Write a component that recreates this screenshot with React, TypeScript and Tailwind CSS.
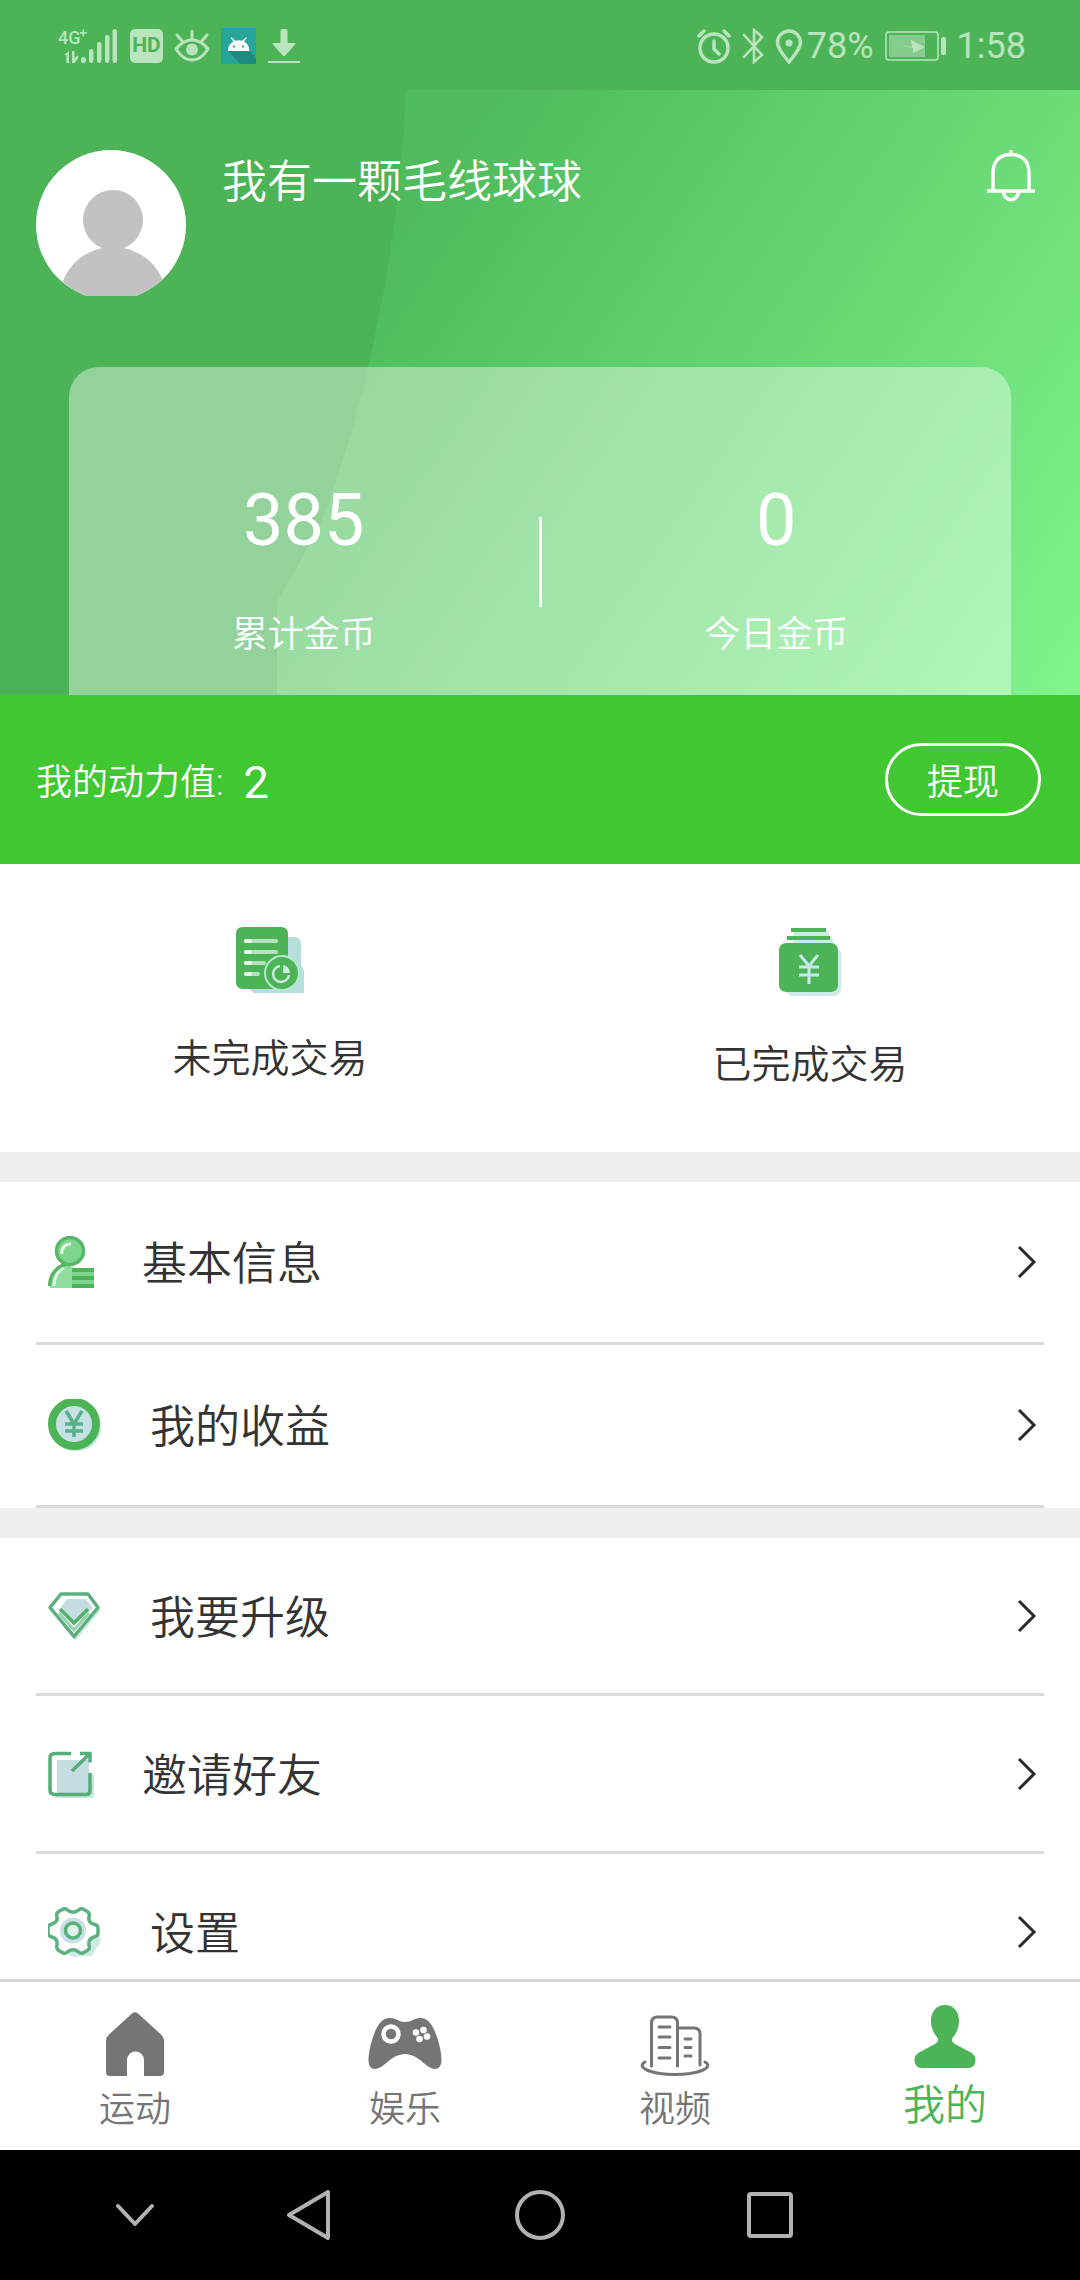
import type { ReactNode } from 'react';

const GREEN = '#4cb457';

const coins = [
  { label: '累计金币', value: 385 },
  { label: '今日金币', value: 0 },
];

const infoRows = [
  { label: '基本信息', icon: <ProfileIcon /> },
  { label: '我的收益', icon: <IncomeIcon /> },
];

const moreRows = [
  { label: '我要升级', icon: <DiamondIcon /> },
  { label: '邀请好友', icon: <ShareIcon /> },
  { label: '设置', icon: <GearIcon /> },
];

const tabs = [
  { label: '运动', icon: <HomeIcon /> },
  { label: '娱乐', icon: <GamepadIcon /> },
  { label: '视频', icon: <BuildingIcon /> },
];

export default function App() {
  return (
    <div className="flex h-screen flex-col bg-white font-['Roboto','Noto_Sans_CJK_SC',sans-serif] font-[350] text-[#333]">
      <StatusBar />
      <main className="min-h-0 flex-1 overflow-y-auto [scrollbar-width:none]">
        <ProfileHeader />
        <section className="flex items-center justify-between bg-[#40c732] pt-12 pr-[39px] pb-12 pl-9 text-white">
          <p className="flex items-center gap-5 pt-1.5">
            <span className="text-4xl">我的动力值:</span>
            <span className="text-[45px] leading-none font-normal">2</span>
          </p>
          <button className="rounded-full border-3 border-white px-[39px] pt-[17px] pb-[10px] text-4xl">提现</button>
        </section>
        <section className="grid grid-cols-2 pt-[63px] pb-[59px]">
          <a href="#pending" className="flex flex-col items-center gap-[38px]">
            <PendingIcon />
            <span className="text-[39px] leading-14">未完成交易</span>
          </a>
          <a href="#finished" className="flex flex-col items-center gap-[38px]">
            <FinishedIcon />
            <span className="text-[39px] leading-14">已完成交易</span>
          </a>
        </section>
        <div className="h-[30px] bg-[#efefef]" />
        <ul>
          {infoRows.map((row) => (
            <MenuRow key={row.label} label={row.label} icon={row.icon} height="h-[163px]" />
          ))}
        </ul>
        <div className="h-[30px] bg-[#efefef]" />
        <ul>
          {moreRows.map((row) => (
            <MenuRow key={row.label} label={row.label} icon={row.icon} height="h-[158px]" />
          ))}
        </ul>
      </main>
      <nav className="grid grid-cols-4 border-t-3 border-[#d6d6d6] pt-[22px] pb-3.5 text-[#757575]">
        {tabs.map((tab) => (
          <a key={tab.label} href="#tab" className="flex flex-col items-center justify-end gap-2">
            {tab.icon}
            <span className="text-4xl leading-[52px]">{tab.label}</span>
          </a>
        ))}
        <a href="#mine" className="flex flex-col items-center justify-end gap-2 text-[#4cb457]">
          <MineIcon />
          <span className="text-[42px] leading-[60px]">我的</span>
        </a>
      </nav>
      <SystemNav />
    </div>
  );
}

function StatusBar() {
  return (
    <div className="flex h-[90px] shrink-0 items-center justify-between bg-[#4cb457] pt-0.5 pr-[54px] pl-14 text-4xl font-normal text-[#b9e4bd]">
      <div className="flex items-center gap-[11px]">
        <svg width="63" height="36" viewBox="0 0 63 36" fill="currentColor">
          <text x="2" y="16" fontSize="18" fontWeight="500" fontFamily="Roboto">4G</text>
          <path d="M24 4h2.500v-2.500h1.600v2.500h2.500v1.700h-2.500v2.500h-1.600v-2.500H24z" />
          <path d="M8 27l5-4v12h-2.600v-8zM16 23h2.600v7l3.600-3v3.500L18.500 35H16z" />
          <rect x="25" y="29" width="5" height="6" rx="2.500" />
          <rect x="33" y="21" width="4.500" height="14" rx="2.200" />
          <rect x="41" y="14" width="4.500" height="21" rx="2.200" />
          <rect x="49" y="7" width="4.500" height="28" rx="2.200" />
          <rect x="56.500" y="1" width="4.500" height="34" rx="2.200" />
        </svg>
        <span className="flex h-[34px] w-[33px] items-center justify-center rounded-[5px] bg-[#b9e4bd] text-[21px] font-bold text-[#4cb457]">HD</span>
        <svg width="36" height="34" viewBox="0 0 36 34" fill="none" stroke="currentColor" strokeWidth="3" strokeLinecap="round">
          <path d="M2 20Q9 11 18 11t16 9q-7 11-16 11T2 20z" />
          <path d="M18 2v8M3 6l5 6M33 6l-5 6" />
          <circle cx="18" cy="20.500" r="6" fill="currentColor" stroke="none" />
        </svg>
        <svg width="35" height="36" viewBox="0 0 35 36">
          <path fill="#26a69a" d="M0 0h35v36H0z" />
          <path fill="#1f8a80" d="M7 23h22l6 7v6H19z" />
          <path fill="#fff" d="M7 23c0-5 2.500-8 5.500-9.500L9.500 10l1-.8 3.700 3.600c2-.8 5-.8 7 0l3.700-3.600 1 .8-3 3.500c3 1.500 5.500 4.500 5.500 9.500z" />
          <path fill="#26a69a" d="M12 17.500h2v2h-2zM21 17.500h2v2h-2z" />
        </svg>
        <svg width="34" height="36" viewBox="0 0 34 36" fill="currentColor">
          <path d="M13.500 3q0-2 2-2h3q2 0 2 2v12h7q2 0 .6 1.500L18.300 27.500q-1.300 1.200-2.600 0L5.900 16.500Q4.500 15 6.500 15h7zM1 33h32v2H1z" />
        </svg>
      </div>
      <div className="flex items-center gap-[11px]">
        <svg width="34" height="36" viewBox="0 0 34 36" fill="none" stroke="currentColor" strokeWidth="3.500" strokeLinecap="round">
          <circle cx="17" cy="20" r="14" />
          <path d="M17 13v8l5 5M2 8l5-5M32 8l-5-5" />
        </svg>
        <svg width="22" height="36" viewBox="0 0 22 36" fill="none" stroke="currentColor" strokeWidth="2.600" strokeLinecap="round">
          <path d="M2 7l18 20-8 7V2l8 7L2 29" />
        </svg>
        <div className="flex items-center gap-1">
          <svg width="28" height="36" viewBox="0 0 28 36" fill="none" stroke="currentColor" strokeWidth="3.500">
            <path d="M14 3a11.500 11.500 0 0 1 11.500 11.500C25.500 21 18 29 14 34 10 29 2.500 21 2.500 14.500A11.500 11.500 0 0 1 14 3z" />
            <circle cx="14" cy="15" r="3.500" fill="currentColor" stroke="none" />
          </svg>
          <span>78%</span>
        </div>
        <svg width="61" height="30" viewBox="0 0 61 30">
          <rect x="1" y="1" width="52" height="28" rx="3" fill="none" stroke="currentColor" strokeWidth="1.600" />
          <rect x="4" y="4" width="36" height="22" fill="#86cd8d" />
          <path d="M14 14l13 2-1-7 14 7-12 6 0-5z" fill="currentColor" />
          <rect x="56" y="6" width="5" height="18" rx="2" fill="currentColor" />
        </svg>
        <span>1:58</span>
      </div>
    </div>
  );
}

function ProfileHeader() {
  return (
    <header className="relative bg-[#4cb457] pt-15 text-white">
      <svg className="absolute inset-0 h-full w-full" viewBox="0 0 1080 605" preserveAspectRatio="none">
        <defs>
          <linearGradient id="glow" gradientUnits="userSpaceOnUse" x1="400" y1="130" x2="1080" y2="600">
            <stop offset="0" stopColor="#4fbb5c" />
            <stop offset="1" stopColor="#80f48d" />
          </linearGradient>
        </defs>
        <path fill="url(#glow)" d="M406 0H1080V605H277V512C300 470 322 440 337 388 360 320 398 180 406 0z" />
      </svg>
      <div className="relative flex items-start justify-between pr-11 pl-9">
        <div className="flex items-start gap-9">
          <Avatar />
          <h1 className="pt-[3px] text-[45px] leading-15">我有一颗毛线球球</h1>
        </div>
        <button aria-label="通知">
          <BellIcon />
        </button>
      </div>
      <div className="relative mx-[69px] mt-[71px] flex items-start rounded-t-[30px] bg-white/40 pt-[114px] pb-[30px]">
        <Coin label={coins[0].label} value={coins[0].value} />
        <div className="mt-9 h-[90px] w-[3px] bg-white" />
        <Coin label={coins[1].label} value={coins[1].value} />
      </div>
    </header>
  );
}

function Coin({ label, value }: { label: string; value: number }) {
  return (
    <div className="flex flex-1 flex-col items-center gap-11">
      <span className="text-7xl leading-20 font-normal">{value}</span>
      <span className="text-4xl leading-15">{label}</span>
    </div>
  );
}

function MenuRow({ label, icon, height }: { label: string; icon: ReactNode; height: string }) {
  return (
    <li className={`mx-9 border-b-3 border-[#dadada] ${height}`}>
      <a href="#menu" className="flex h-full items-center gap-12 pr-[7px] pl-3">
        {icon}
        <span className="flex-1 pt-1.5 text-[45px] leading-15">{label}</span>
        <svg width="20" height="34" viewBox="0 0 20 34" fill="none" stroke="#2b2b2b" strokeWidth="3">
          <path d="M2 2l15 15L2 32" />
        </svg>
      </a>
    </li>
  );
}

function SystemNav() {
  return (
    <div className="grid h-[130px] shrink-0 grid-cols-[195fr_230fr_230fr_230fr_195fr] items-center bg-black text-[#b2b2b2]">
      <button aria-label="收起" className="justify-self-end pr-10">
        <svg width="40" height="26" viewBox="0 0 40 26" fill="none" stroke="currentColor" strokeWidth="4" strokeLinecap="round" strokeLinejoin="round">
          <path d="M3 4l17 18L37 4" />
        </svg>
      </button>
      <button aria-label="返回" className="justify-self-center">
        <svg width="46" height="52" viewBox="0 0 46 52" fill="none" stroke="currentColor" strokeWidth="4" strokeLinejoin="round">
          <path d="M41 3v46L2 26z" />
        </svg>
      </button>
      <button aria-label="主屏幕" className="justify-self-center">
        <svg width="52" height="52" viewBox="0 0 52 52" fill="none" stroke="currentColor" strokeWidth="4">
          <circle cx="26" cy="26" r="23" />
        </svg>
      </button>
      <button aria-label="最近任务" className="justify-self-center">
        <svg width="46" height="46" viewBox="0 0 46 46" fill="none" stroke="currentColor" strokeWidth="4">
          <rect x="2" y="2" width="42" height="42" rx="2" />
        </svg>
      </button>
    </div>
  );
}

function Avatar() {
  return (
    <svg width="150" height="146" viewBox="0 0 150 146">
      <defs>
        <clipPath id="avatar">
          <circle cx="75" cy="75" r="75" />
        </clipPath>
      </defs>
      <g clipPath="url(#avatar)">
        <path fill="#fff" d="M0 0h150v150H0z" />
        <g fill="#c2c2c2">
          <circle cx="77" cy="70" r="30" />
          <path d="M67 92h20v10H67z" />
          <ellipse cx="77" cy="148" rx="53" ry="51" />
        </g>
      </g>
    </svg>
  );
}

function BellIcon() {
  return (
    <svg width="50" height="52" viewBox="0 0 50 52" fill="none" stroke="#fff" strokeWidth="3.500">
      <path d="M7 41V23C7 11 14 4.500 25 4.500S43 11 43 23v18M1 41h48M25 0v5M17.500 41c0 11.500 15 11.500 15 0" />
    </svg>
  );
}

function PendingIcon() {
  return (
    <svg width="68" height="66" viewBox="0 0 68 66">
      <path fill="#b5dfdb" d="M50 10h8q7 0 7 7v21l3 6v22H18l-6-5z" />
      <path fill={GREEN} d="M7 0h38q7 0 7 7v55H7q-7 0-7-7V7q0-7 7-7z" />
      <path stroke="#b5e2c0" strokeWidth="4" strokeLinecap="round" d="M10 14h30M10 25h30M10 36h18M10 47h12" />
      <path stroke="#e4f7e8" strokeWidth="4" strokeLinecap="round" d="M10 14h4M10 25h4M10 36h4M10 47h4" />
      <circle cx="46" cy="46" r="17" fill={GREEN} stroke="#b9e6cf" strokeWidth="2" />
      <path d="M44 39a8 8 0 1 0 9 9" fill="none" stroke="#c9ecdd" strokeWidth="2.500" />
      <path d="M47 38a8 8 0 0 1 7 8h-7z" fill="#c9ecdd" />
    </svg>
  );
}

function FinishedIcon() {
  return (
    <svg width="64" height="72" viewBox="0 0 64 72">
      <path fill="#cdebe6" d="M16 4h35v4l4 4v6l8 7v37q0 7-7 7H13l-6-4z" />
      <path fill={GREEN} d="M13 1h35v4H13zM9 9h43v4H9z" />
      <rect x="1" y="16" width="59" height="49" rx="7" fill={GREEN} />
      <path fill="none" stroke="#c6e9ee" strokeWidth="3" d="M22 28l9 11 9-11M31 39v18M21 40h20M21 48h20" />
    </svg>
  );
}

function ProfileIcon() {
  return (
    <svg width="46" height="52" viewBox="0 0 46 52">
      <path fill="#8fdc9e" d="M2 52c0-12 6-22 18-23l6 3v20z" />
      <path fill="none" stroke="#56b765" strokeWidth="3.500" d="M1.500 50C2 39 8 30 20 28" />
      <circle cx="22" cy="15" r="13.500" fill="#7fd58e" stroke="#56b765" strokeWidth="3.500" />
      <path fill="none" stroke="#dff7e2" strokeWidth="3" d="M14 18c-1-6 3-10 9-10M6 50c0-9 4-15 10-18" />
      <path fill="#7fd58e" d="M24 32h22v20H24z" />
      <path stroke="#4cb457" strokeWidth="4" d="M24 34h22M24 42h22M24 50h22" />
    </svg>
  );
}

function IncomeIcon() {
  return (
    <svg width="54" height="52" viewBox="0 0 54 52">
      <circle cx="29" cy="28" r="24" fill="#c3e9e2" />
      <circle cx="26" cy="25" r="22" fill="#c5e1e4" stroke={GREEN} strokeWidth="8" />
      <path fill="none" stroke="#56b08a" strokeWidth="3.500" d="M18 12l8 13 8-13M26 25v13M17 25h18M17 32h18" />
    </svg>
  );
}

function DiamondIcon() {
  return (
    <svg width="54" height="52" viewBox="0 0 54 52">
      <path fill="#c8e8e2" d="M20 12h24l9 8-26 31-17-22z" />
      <path fill="#fff" stroke="#5cae7c" strokeWidth="3.500" strokeLinejoin="round" d="M13 4h27l10 13.500L26 46.500 2 17.500z" />
      <path fill="#c5dde1" d="M19 9h19l7 9-19 17-13-18z" />
      <path fill="none" stroke="#8fd6a8" strokeWidth="3" d="M11 23l15 17 15-17" />
      <path fill="none" stroke="#52b06f" strokeWidth="3.500" d="M12 19l14 14 14-14" />
    </svg>
  );
}

function ShareIcon() {
  return (
    <svg width="46" height="48" viewBox="0 0 46 48">
      <path fill="#c8e8e2" d="M42 24h4v24H8v-3h34z" />
      <path fill="#c5dde1" d="M9 10h32v33H9z" />
      <path fill="none" stroke="#55ad77" strokeWidth="3.500" d="M23 3.500H7Q2 3.500 2 8v32q0 4.500 5 4.500h31q4 0 4-4V23M32 3.500h10v9M42 3.500L24 21" />
    </svg>
  );
}

function GearIcon() {
  return (
    <svg width="54" height="52" viewBox="0 0 54 52">
      <path fill="#cfe9e6" d="M19 10l20-2 12 18 2 9-9 15-20 1-9-8z" />
      <path
        fill="#fff"
        stroke="#5bb27e"
        strokeWidth="3.500"
        strokeLinejoin="round"
        d="M15 3q3-1 5 1.500 5 3.500 10 0 2-2.500 5-1.500l5 3q2 2 1 5-1 5 4 7 5 1 5 4v5q0 3-4 4-6 2-5 8 1 4-1 5l-5 3q-3 1-5-1.500-5-3.500-10 0-2 2.500-5 1.500l-5-3q-2-2-1-5 1-6-5-8-4-1-4-4v-5q0-3 4-4 6-2 5-7-1-3 1-5z"
      />
      <circle cx="25" cy="24.500" r="13" fill="#c9dfe4" />
      <circle cx="25" cy="24.500" r="7.500" fill="#e2f1ee" stroke="#55b177" strokeWidth="3.500" />
    </svg>
  );
}

function HomeIcon() {
  return (
    <svg width="58" height="64" viewBox="0 0 58 64" fill="currentColor">
      <path d="M26 1.500q3-2.500 6 0l23 21q3 3 3 6V60q0 4-4 4H38V48a8.500 8.500 0 0 0-17 0v16H4q-4 0-4-4V28.500q0-3 3-6z" />
    </svg>
  );
}

function GamepadIcon() {
  return (
    <svg width="74" height="58" viewBox="0 0 74 58">
      <path
        fill="currentColor"
        d="M22 0c7 0 8 4 15 4s9-4 15-4c9 0 13 8 17 19 3 9 4.500 17 4.500 23 0 6-3 9-6.500 9-9 0-16-15-30-15S16 51 7 51c-4 0-6.500-3-6.500-9 0-6 1.500-14 4.500-23C9 8 13 0 22 0z"
      />
      <circle cx="23" cy="16" r="7.500" fill="none" stroke="#fff" strokeWidth="4.500" />
      <g fill="#fff">
        <circle cx="48" cy="14.500" r="3.300" />
        <circle cx="55.500" cy="12" r="3.300" />
        <circle cx="51.500" cy="21" r="3.300" />
        <circle cx="59" cy="18.500" r="3.300" />
      </g>
    </svg>
  );
}

function BuildingIcon() {
  return (
    <svg width="70" height="62" viewBox="0 0 70 62" fill="none" stroke="currentColor" strokeWidth="3" strokeLinecap="round">
      <path d="M11.500 52V9q0-6 6-6h14q6 0 6 6v43M38 14h16q6 0 6 6v31" />
      <path d="M5 48c-10 6 8 12.500 30 12.500S75 54 65 48" />
      <path d="M19 13h11M19 23h11M19 33.500h11M19 44h11M45 25h6M45 33.500h6M45 42h6" />
    </svg>
  );
}

function MineIcon() {
  return (
    <svg width="62" height="64" viewBox="0 0 62 64" fill="currentColor">
      <path d="M31 1c9 0 14 7 14 16 0 7-3 13-6 16-2 3-1 5 2 7l15 8c4 2 5.500 5 5.500 8 0 5-3 8-7 8h-47c-4 0-7-3-7-8 0-3 1.500-6 5.500-8l15-8c3-2 4-4 2-7-3-3-6-9-6-16 0-9 5-16 14-16z" />
    </svg>
  );
}
